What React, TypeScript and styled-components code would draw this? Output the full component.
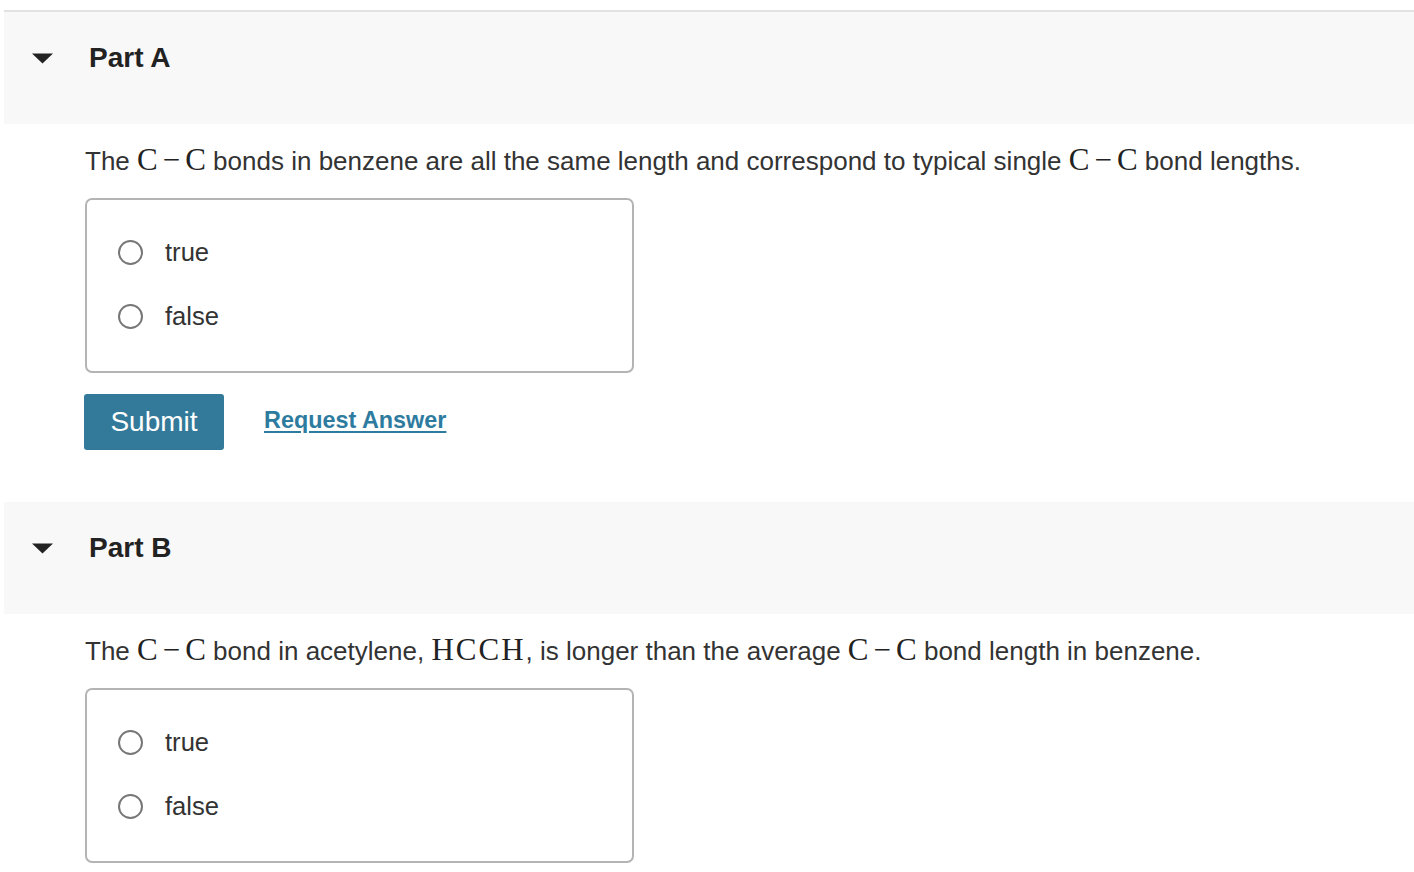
import React from "react";
import styled, { createGlobalStyle } from "styled-components";

const GlobalStyle = createGlobalStyle`
  body {
    margin: 0;
    background: #ffffff;
    font-family: "Liberation Sans", Arial, sans-serif;
    color: #333333;
  }
`;

const Page = styled.div`
  padding: 10px 0 0 4px;
`;
const Section = styled.section`
  &:first-child {
    border-top: 2px solid #e2e2e2;
  }
`;
const Header = styled.div`
  height: 112px;
  background: #f8f8f8;
  display: flex;
  align-items: flex-start;
  padding: 28px 0 0 28px;
  box-sizing: border-box;
`;
const Caret = styled.svg`
  width: 21px;
  height: 11px;
  margin-top: 13px;
  margin-right: 36px;
`;
const Title = styled.h2`
  margin: 0;
  font-size: 28px;
  line-height: 36px;
  font-weight: 700;
  color: #222;
`;
const Body = styled.div`
  padding: 19px 0 52px 81px;
`;
const Question = styled.p`
  margin: 0;
  font-size: 26px;
  line-height: 34px;
  color: #333;
`;
const M = styled.span<{ $spaced?: boolean }>`
  font-family: "Liberation Serif", "Times New Roman", serif;
  font-size: 31px;
  color: #222;
  letter-spacing: ${(p) => (p.$spaced ? "2px" : "0")};
`;
const Op = styled.span`
  margin: 0 5px;
`;
const Choices = styled.div`
  margin-top: 20px;
  width: 549px;
  box-sizing: border-box;
  border: 2px solid #b4b4b4;
  border-radius: 7px;
  padding: 20px 0 23px 31px;
`;
const Choice = styled.label`
  display: flex;
  align-items: center;
  height: 64px;
`;
const Radio = styled.span`
  width: 25px;
  height: 25px;
  box-sizing: border-box;
  border: 2px solid #777;
  border-radius: 50%;
  margin-right: 22px;
`;
const ChoiceLabel = styled.span`
  font-size: 25.6px;
  color: #333;
`;
const Actions = styled.div`
  margin-top: 21px;
  display: flex;
  align-items: center;
  gap: 40px;
`;
const SubmitButton = styled.button`
  width: 140px;
  height: 56px;
  margin-left: -1px;
  border: none;
  border-radius: 3px;
  background: #337a9a;
  color: #fff;
  font-family: "Liberation Sans", Arial, sans-serif;
  font-size: 28px;
  padding: 0;
`;
const RequestLink = styled.a`
  font-size: 23.4px;
  font-weight: 700;
  color: #2e7ba0;
  text-decoration: underline;
  text-underline-offset: 3px;
  margin-top: -4px;
`;

type Part = {
  label: string;
  question: React.ReactNode;
  showActions: boolean;
};

const Bond = () => (
  <M>
    C<Op>−</Op>C
  </M>
);

const parts: Part[] = [
  {
    label: "Part A",
    question: (
      <>
        The <Bond /> bonds in benzene are all the same length and correspond to typical single <Bond /> bond lengths.
      </>
    ),
    showActions: true,
  },
  {
    label: "Part B",
    question: (
      <>
        The <Bond /> bond in acetylene, <M $spaced>HCCH</M>, is longer than the average <Bond /> bond length in benzene.
      </>
    ),
    showActions: false,
  },
];

const App: React.FC = () => {
  return (
    <>
      <GlobalStyle />
      <Page>
        {parts.map((part) => (
          <Section key={part.label}>
            <Header>
              <Caret viewBox="0 0 21 11">
                <path d="M0 0.5 H21 L10.5 10.5 Z" fill="#222" />
              </Caret>
              <Title>{part.label}</Title>
            </Header>
            <Body>
              <Question>{part.question}</Question>
              <Choices>
                {["true", "false"].map((c) => (
                  <Choice key={c}>
                    <Radio />
                    <ChoiceLabel>{c}</ChoiceLabel>
                  </Choice>
                ))}
              </Choices>
              {part.showActions && (
                <Actions>
                  <SubmitButton>Submit</SubmitButton>
                  <RequestLink href="#">Request Answer</RequestLink>
                </Actions>
              )}
            </Body>
          </Section>
        ))}
      </Page>
    </>
  );
};

export default App;
